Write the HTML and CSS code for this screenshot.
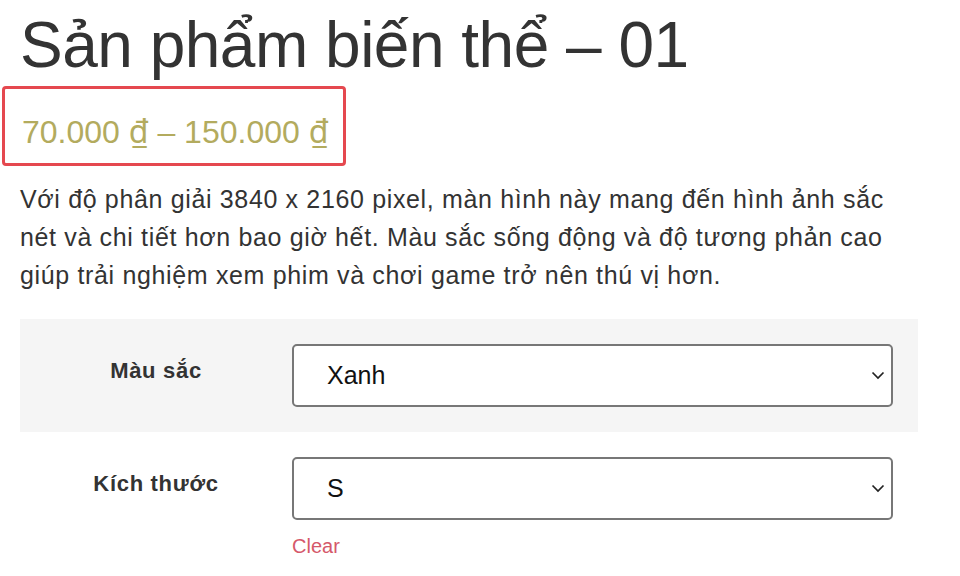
FILE: index.html
```html
<!DOCTYPE html>
<html lang="vi">
<head>
<meta charset="utf-8">
<link rel="stylesheet" href="styles.css">
</head>
<body>
<div class="page">
  <h1 class="title">Sản phẩm biến thể – 01</h1>
  <div class="price-box">
    <span class="price">70.000 <span class="cur">₫</span> – 150.000 <span class="cur">₫</span></span>
  </div>
  <p class="desc">Với độ phân giải 3840 x 2160 pixel, màn hình này mang đến hình ảnh sắc nét và chi tiết hơn bao giờ hết. Màu sắc sống động và độ tương phản cao giúp trải nghiệm xem phim và chơi game trở nên thú vị hơn.</p>
  <div class="variations">
    <div class="var-row alt">
      <div class="label">Màu sắc</div>
      <div class="value">
        <div class="select"><span>Xanh</span>
          <svg class="chev" width="14" height="9" viewBox="0 0 14 9"><path d="M1.5 1.5 L7 7 L12.5 1.5" fill="none" stroke="#222" stroke-width="1.7"/></svg>
        </div>
      </div>
    </div>
    <div class="var-row">
      <div class="label">Kích thước</div>
      <div class="value">
        <div class="select"><span>S</span>
          <svg class="chev" width="14" height="9" viewBox="0 0 14 9"><path d="M1.5 1.5 L7 7 L12.5 1.5" fill="none" stroke="#222" stroke-width="1.7"/></svg>
        </div>
        <a class="clear" href="#">Clear</a>
      </div>
    </div>
  </div>
</div>
</body>
</html>
```
FILE: styles.css
```css
html, body {
  margin: 0;
  padding: 0;
  background: #fff;
}
body {
  font-family: "Liberation Sans", Arial, sans-serif;
  color: #333;
}
.page {
  padding: 6px 0 0 20px;
  width: 898px;
}
.title {
  margin: 0;
  font-size: 64px;
  font-weight: 400;
  line-height: 78px;
  color: #333;
  letter-spacing: -0.5px;
}
.price-box {
  display: inline-block;
  margin: 2px 0 0 -18px;
  padding: 22px 15px 11px 17px;
  border: 3px solid #e5484f;
  border-radius: 4px;
}
.price {
  display: block;
  font-size: 32px;
  line-height: 40px;
  color: #b3ab5e;
}
.cur {
  font-family: "Noto Sans", "DejaVu Sans", sans-serif;
}
.desc {
  margin: 14px 0 0 0;
  font-size: 25px;
  line-height: 38px;
  letter-spacing: 0.65px;
  color: #333;
  width: 880px;
}
.variations {
  margin-top: 25px;
}
.var-row {
  display: grid;
  grid-template-columns: 272px 601px;
  padding: 25px 0;
}
.var-row.alt {
  background: #f5f5f5;
}
.label {
  text-align: center;
  font-weight: 700;
  font-size: 22px;
  line-height: 53px;
  color: #333;
  letter-spacing: 0.7px;
}
.select {
  box-sizing: border-box;
  height: 63px;
  border: 2px solid #777;
  border-radius: 5px;
  background: #fff;
  display: flex;
  align-items: center;
  justify-content: space-between;
  padding: 0 6px 0 33px;
  font-size: 25px;
  color: #111;
}
.chev {
  display: block;
}
.clear {
  display: block;
  margin-top: 14px;
  font-size: 20px;
  color: #d5586a;
  text-decoration: none;
  line-height: 24px;
}
```
